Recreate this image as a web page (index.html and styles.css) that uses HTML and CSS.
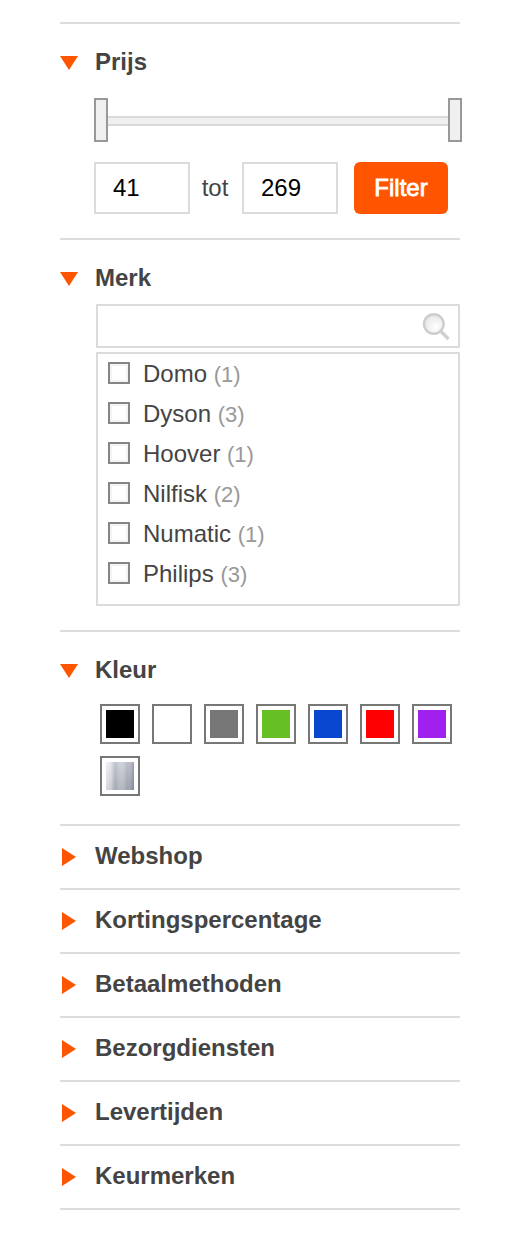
FILE: index.html
```html
<!DOCTYPE html>
<html lang="nl">
	<head>
		<meta charset="UTF-8" />
		<meta name="viewport" content="width=device-width, initial-scale=1.0" />
		<title>Filters</title>
		<link rel="stylesheet" href="styles.css">
	</head>
	<body>
		<div class="filters">
			<section class="filter open">
				<h3 class="filter-title">
					<svg class="arrow" viewBox="0 0 18 28"><path d="M0 8h18L9 22z" /></svg>
					Prijs
				</h3>
				<div class="slider">
					<span class="slider-handle"></span>
					<span class="slider-track"></span>
					<span class="slider-handle"></span>
				</div>
				<div class="price-row">
					<input type="text" class="price-input" value="41" />
					<span class="price-to">tot</span>
					<input type="text" class="price-input" value="269" />
					<button class="filter-btn">Filter</button>
				</div>
			</section>

			<section class="filter open">
				<h3 class="filter-title">
					<svg class="arrow" viewBox="0 0 18 28"><path d="M0 8h18L9 22z" /></svg>
					Merk
				</h3>
				<div class="search">
					<input type="text" class="search-input" />
					<svg class="search-icon" viewBox="0 0 30 30">
						<defs>
							<radialGradient id="lens" cx="0.6" cy="0.65" r="0.6">
								<stop offset="0" stop-color="#fff" />
								<stop offset="1" stop-color="#e8e8e8" />
							</radialGradient>
						</defs>
						<path d="M21 20.5l7.5 7.5" fill="none" stroke="#d0d0d0" stroke-width="3.4" />
						<circle cx="13.8" cy="13" r="9.8" fill="url(#lens)" stroke="#cdcdcd" stroke-width="2.4" />
					</svg>
				</div>
				<div class="brands">
					<label class="brand"><input type="checkbox" class="check" />Domo <span class="count">(1)</span></label>
					<label class="brand"><input type="checkbox" class="check" />Dyson <span class="count">(3)</span></label>
					<label class="brand"><input type="checkbox" class="check" />Hoover <span class="count">(1)</span></label>
					<label class="brand"><input type="checkbox" class="check" />Nilfisk <span class="count">(2)</span></label>
					<label class="brand"><input type="checkbox" class="check" />Numatic <span class="count">(1)</span></label>
					<label class="brand"><input type="checkbox" class="check" />Philips <span class="count">(3)</span></label>
				</div>
			</section>

			<section class="filter open">
				<h3 class="filter-title">
					<svg class="arrow" viewBox="0 0 18 28"><path d="M0 8h18L9 22z" /></svg>
					Kleur
				</h3>
				<div class="colors">
					<span class="color black"></span>
					<span class="color white"></span>
					<span class="color gray"></span>
					<span class="color green"></span>
					<span class="color blue"></span>
					<span class="color red"></span>
					<span class="color purple"></span>
					<span class="color silver"></span>
				</div>
			</section>

			<section class="filter">
				<h3 class="filter-title">
					<svg class="arrow" viewBox="0 0 18 28"><path d="M2 6l14 9-14 9z" /></svg>
					Webshop
				</h3>
			</section>
			<section class="filter">
				<h3 class="filter-title">
					<svg class="arrow" viewBox="0 0 18 28"><path d="M2 6l14 9-14 9z" /></svg>
					Kortingspercentage
				</h3>
			</section>
			<section class="filter">
				<h3 class="filter-title">
					<svg class="arrow" viewBox="0 0 18 28"><path d="M2 6l14 9-14 9z" /></svg>
					Betaalmethoden
				</h3>
			</section>
			<section class="filter">
				<h3 class="filter-title">
					<svg class="arrow" viewBox="0 0 18 28"><path d="M2 6l14 9-14 9z" /></svg>
					Bezorgdiensten
				</h3>
			</section>
			<section class="filter">
				<h3 class="filter-title">
					<svg class="arrow" viewBox="0 0 18 28"><path d="M2 6l14 9-14 9z" /></svg>
					Levertijden
				</h3>
			</section>
			<section class="filter">
				<h3 class="filter-title">
					<svg class="arrow" viewBox="0 0 18 28"><path d="M2 6l14 9-14 9z" /></svg>
					Keurmerken
				</h3>
			</section>
		</div>
	</body>
</html>
```

FILE: styles.css
```css
* {
	box-sizing: border-box;
}

body {
	margin: 0;
	background-color: #fff;
	color: #444;
	font-family: "Liberation Sans", Arial, sans-serif;
	font-size: 24px;
	line-height: 28px;
}

.filters {
	width: 400px;
	margin: 22px 0 36px 60px;
	border-bottom: 2px solid #dcdcdc;
}

.filter {
	border-top: 2px solid #dcdcdc;
	padding: 16px 0 18px;
}

.filter.open {
	padding: 24px 0;
}

.filter-title {
	display: flex;
	gap: 17px;
	margin: 0;
	font-size: 24px;
	font-weight: 700;
}

.arrow {
	width: 18px;
	height: 28px;
	fill: #ff5500;
}

.slider {
	display: flex;
	align-items: center;
	width: 368px;
	margin: 22px 0 0 34px;
}

.slider-handle {
	width: 14px;
	height: 44px;
	background-color: #f0f0f0;
	border: 2px solid #999;
}

.slider-track {
	flex: 1;
	height: 10px;
	margin-top: 2px;
	background-color: #f0f0f0;
	border: solid #dadada;
	border-width: 2px 0;
}

.price-row {
	display: flex;
	align-items: center;
	margin: 20px 0 0 34px;
}

.price-input {
	width: 96px;
	height: 52px;
	padding: 0 16px 0 17px;
	border: 2px solid #dcdcdc;
	border-radius: 0;
	outline: none;
	background-color: #fff;
	color: #000;
	font: inherit;
}

.price-to {
	width: 52px;
	padding-right: 2px;
	text-align: center;
}

.filter-btn {
	width: 94px;
	height: 52px;
	margin-left: 16px;
	padding: 0;
	border: none;
	border-radius: 6px;
	background-color: #ff5500;
	color: #fff;
	font: inherit;
	-webkit-text-stroke: 0.8px #fff;
}

.filter-btn:hover {
	cursor: pointer;
}

.search {
	display: flex;
	align-items: center;
	height: 44px;
	margin: 12px 0 4px 36px;
	padding-right: 8px;
	border: 2px solid #dcdcdc;
}

.search-input {
	flex: 1;
	min-width: 0;
	height: 40px;
	padding: 0 10px;
	border: none;
	outline: none;
	background: none;
	font: inherit;
}

.search-icon {
	width: 30px;
	height: 30px;
}

.brands {
	height: 254px;
	margin-left: 36px;
	border: 2px solid #dcdcdc;
}

.brand {
	display: flex;
	align-items: baseline;
	height: 40px;
	padding: 6px 0 0 10px;
	white-space: pre;
}

.check {
	appearance: none;
	align-self: flex-start;
	width: 22px;
	height: 22px;
	margin: 2px 13px 0 0;
	border: 2px solid #858585;
	border-radius: 0;
	background-color: #fff;
	box-shadow: inset 0 0 0 2px #f4f4f4;
}

.count {
	color: #999;
	font-size: 22px;
}

.colors {
	display: flex;
	flex-wrap: wrap;
	gap: 12px;
	margin: 20px 0 4px 40px;
}

.color {
	width: 40px;
	height: 40px;
	padding: 4px;
	border: 2px solid #777;
	background-clip: content-box;
}

.black {
	background-color: #000;
}

.white {
	background-color: #fff;
}

.gray {
	background-color: #777;
}

.green {
	background-color: #66c023;
}

.blue {
	background-color: #0a47d1;
}

.red {
	background-color: #f00;
}

.purple {
	background-color: #a020f0;
}

.silver {
	background-image: linear-gradient(to bottom, rgba(255, 255, 255, 0.25), rgba(60, 60, 80, 0.18)),
		linear-gradient(to right, #f4f5f9 6px, #e4e6ec 11px, #b2b8c2 15px, #c8cdd5 20px, #c3c8d1 24px, #adb1bd 27px, #b0b3c0 30px, #8a8c9c 34px);
	background-origin: border-box;
}
```
